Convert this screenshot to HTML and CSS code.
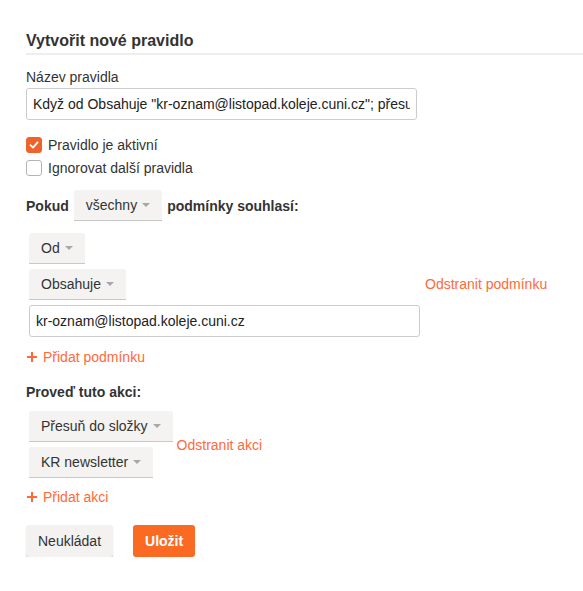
FILE: index.html
```html
<!DOCTYPE html>
<html lang="cs">
<head>
    <meta charset="UTF-8">
    <meta name="viewport" content="width=device-width, initial-scale=1.0">
    <title>Vytvořit nové pravidlo</title>
    <link rel="stylesheet" href="styles.css">
</head>
<body>
    <div class="container">
        <h2>Vytvořit nové pravidlo</h2>

        <label class="field-label" for="name">Název pravidla</label>
        <input class="text-input" type="text" id="name" value="Když od Obsahuje &quot;kr-oznam@listopad.koleje.cuni.cz&quot;; přesuň do složky KR newsletter">

        <div class="checks">
            <label class="check-row"><span class="box checked"><svg width="12" height="12" viewBox="0 0 12 12"><path d="M2.5 6.2 L5 8.6 L9.6 3.4" fill="none" stroke="#fff" stroke-width="1.8" stroke-linecap="round" stroke-linejoin="round"/></svg></span>Pravidlo je aktivní</label>
            <label class="check-row"><span class="box"></span>Ignorovat další pravidla</label>
        </div>

        <div class="match-row">
            <b>Pokud</b>
            <button class="drop">všechny<span class="caret"></span></button>
            <b>podmínky souhlasí:</b>
        </div>

        <div class="conditions">
            <div class="cond-col">
                <button class="drop">Od<span class="caret"></span></button>
                <button class="drop">Obsahuje<span class="caret"></span></button>
            </div>
            <a class="link remove-cond" href="#">Odstranit podmínku</a>
            <input class="text-input cond-input" type="text" value="kr-oznam@listopad.koleje.cuni.cz">
        </div>

        <a class="link add" href="#"><svg width="10" height="10" viewBox="0 0 10 10"><rect x="4" y="0" width="2" height="10" fill="#ff6a3a"/><rect x="0" y="4" width="10" height="2" fill="#ff6a3a"/></svg>Přidat podmínku</a>

        <h3>Proveď tuto akci:</h3>

        <div class="actions">
            <div class="action-col">
                <button class="drop">Přesuň do složky<span class="caret"></span></button>
                <button class="drop">KR newsletter<span class="caret"></span></button>
            </div>
            <a class="link" href="#">Odstranit akci</a>
        </div>

        <a class="link add" href="#"><svg width="10" height="10" viewBox="0 0 10 10"><rect x="4" y="0" width="2" height="10" fill="#ff6a3a"/><rect x="0" y="4" width="10" height="2" fill="#ff6a3a"/></svg>Přidat akci</a>

        <div class="buttons">
            <button class="btn">Neukládat</button>
            <button class="btn primary">Uložit</button>
        </div>
    </div>
</body>
</html>
```

FILE: styles.css
```css
body {
    font-family: "Liberation Sans", Arial, sans-serif;
    font-size: 14px;
    color: #333;
    background-color: white;
    margin: 0;
}
.container {
    padding: 32px 0 0 26px;
}
h2 {
    font-size: 16px;
    line-height: 18px;
    margin: 0;
    padding-bottom: 3px;
    border-bottom: 2px solid #eee;
}
.field-label {
    display: block;
    line-height: 16px;
    margin: 14px 0 3px;
}
.text-input {
    display: block;
    box-sizing: border-box;
    width: 391px;
    height: 32px;
    margin: 0;
    padding: 0 6px;
    border: 1px solid #ccc;
    border-radius: 3px;
    font-family: inherit;
    font-size: 14px;
    color: #222;
    outline: none;
}
.checks {
    margin-top: 13px;
}
.check-row {
    display: flex;
    align-items: center;
    height: 23px;
    gap: 6px;
}
.box {
    box-sizing: border-box;
    width: 16px;
    height: 16px;
    border: 1px solid #b4b4b4;
    border-radius: 3px;
    display: flex;
    align-items: center;
    justify-content: center;
}
.box.checked {
    background-color: #f0622a;
    border-color: #f0622a;
}
.match-row {
    display: flex;
    align-items: center;
    gap: 5px;
    margin-top: 11px;
}
.drop {
    display: inline-flex;
    align-items: center;
    box-sizing: border-box;
    height: 31px;
    padding: 0 12px;
    background-color: #f4f3f2;
    border: none;
    border-bottom: 1px solid #c8c8c8;
    border-radius: 3px 3px 0 0;
    font-family: inherit;
    font-size: 14px;
    color: #333;
    cursor: pointer;
}
.caret {
    width: 0;
    height: 0;
    margin-left: 5px;
    border-left: 4px solid transparent;
    border-right: 4px solid transparent;
    border-top: 4px solid #a8a8a8;
}
.conditions {
    display: grid;
    grid-template-columns: 391px auto;
    column-gap: 5px;
    row-gap: 5px;
    margin: 12px 0 0 3px;
}
.cond-col {
    display: flex;
    flex-direction: column;
    align-items: flex-start;
    gap: 5px;
}
.remove-cond {
    align-self: end;
    line-height: 31px;
}
.cond-input {
    grid-column: 1;
}
.link {
    color: #ff6a3a;
    text-decoration: none;
}
.add {
    display: flex;
    align-items: center;
    gap: 6px;
    line-height: 16px;
    margin-top: 12px;
    padding-left: 1px;
}
h3 {
    font-size: 14px;
    line-height: 16px;
    margin: 19px 0 0;
}
.actions {
    display: flex;
    align-items: center;
    gap: 4px;
    margin: 11px 0 0 3px;
}
.action-col {
    display: flex;
    flex-direction: column;
    align-items: flex-start;
    gap: 5px;
}
.actions + .add {
    margin-top: 11px;
}
.buttons {
    display: flex;
    gap: 20px;
    margin-top: 20px;
}
.btn {
    height: 32px;
    padding: 0 12px;
    border: none;
    border-radius: 3px;
    background-color: #f3f2f1;
    box-shadow: 0 1px 1px rgba(0, 0, 0, 0.25);
    font-family: inherit;
    font-size: 14px;
    color: #333;
    cursor: pointer;
}
.btn.primary {
    background-color: #fb6a22;
    color: white;
    font-weight: bold;
    box-shadow: none;
}
```
